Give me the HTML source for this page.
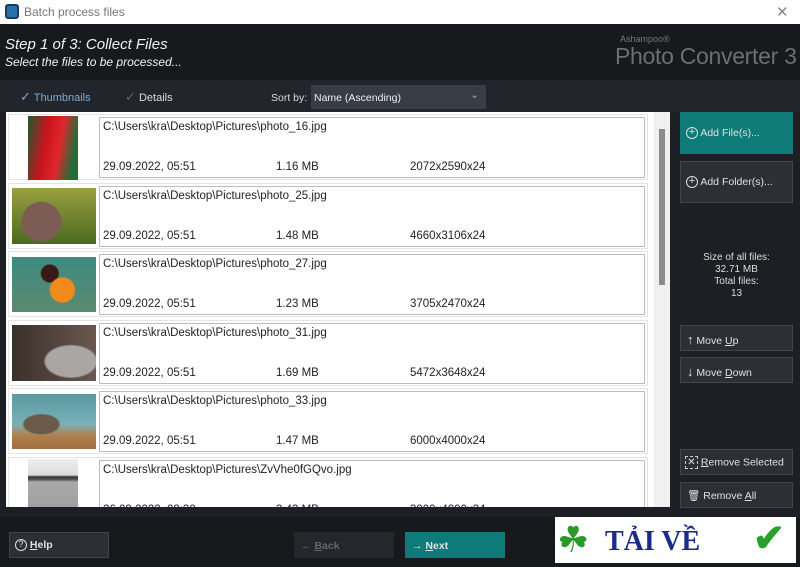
<!DOCTYPE html>
<html><head><meta charset="utf-8"><style>
*{margin:0;padding:0;box-sizing:border-box}
body{width:800px;height:567px;overflow:hidden;background:#1c1f24;font-family:"Liberation Sans",sans-serif;position:relative;color:#e6e6e6}
.abs{position:absolute}
.tb{left:0;top:0;width:800px;height:24px;background:#fff;color:#777;font-size:12px}
.hdr{left:0;top:24px;width:800px;height:56px;background:#17191c}
.tool{left:0;top:80px;width:800px;height:32px;background:#22252b}
.list{left:6px;top:112px;width:664px;height:395px;background:#fff;overflow:hidden}
.row{position:absolute;left:2px;width:640px;height:66px;border:1px solid #e4e4e4}
.info{position:absolute;left:90px;top:2px;width:546px;height:61px;border:1px solid #bdbdbd;font-size:11.5px;color:#222}
.info .p{position:absolute;left:3px;top:3px}
.info .d{position:absolute;top:43px}
.th{position:absolute}
.btn{position:absolute;background:#2c3036;border:1px solid #40454c;color:#e0e0e0;font-size:10.5px}
.ic{display:inline-block;width:12px;height:12px;border:1.4px solid #ddd;border-radius:50%;vertical-align:middle;text-align:center;line-height:9px;font-size:11px}
</style></head><body>
<div class="abs tb"><div class="abs" style="left:5px;top:4px;width:14px;height:15px;background:#2a6fa8;border-radius:3px;border:2px solid #1a3d5c"></div><span class="abs" style="left:24px;top:5px">Batch process files</span><span class="abs" style="left:776px;top:3px;font-size:15px;color:#888">✕</span></div>
<div class="abs hdr">
<div class="abs" style="left:5px;top:12px;font-size:15px;font-style:italic;color:#f2f2f2">Step 1 of 3: Collect Files</div>
<div class="abs" style="left:5px;top:31px;font-size:12px;font-style:italic;color:#f2f2f2">Select the files to be processed...</div>
<div class="abs" style="left:620px;top:10px;font-size:9px;color:#777">Ashampoo®</div>
<div class="abs" style="left:615px;top:19px;font-size:23px;color:#6e6e6e;letter-spacing:-0.3px">Photo Converter 3</div>
</div>
<div class="abs tool">
<span class="abs" style="left:20px;top:9px;font-size:11px;color:#7fa9d6"><span style="font-size:13px">✓</span> Thumbnails</span>
<span class="abs" style="left:125px;top:9px;font-size:11px;color:#ddd"><span style="font-size:13px;color:#666">✓</span> Details</span>
<span class="abs" style="left:271px;top:12px;font-size:10.5px;color:#ddd">Sort by:</span>
<div class="abs" style="left:311px;top:5px;width:175px;height:24px;background:#383c44;font-size:10.5px;color:#eee;padding:7px 3px">Name (Ascending)<span style="position:absolute;right:7px;top:4px;color:#aaa">⌄</span></div>
</div>
<div class="abs list">
<div class="row" style="top:2px"><div class="th" style="left:19px;top:1px;width:50px;height:64px;background:linear-gradient(100deg,#1d5a30 0%,#c8141c 35%,#e0262a 60%,#2a6a38 85%)"></div><div class="info"><span class="p">C:\Users\kra\Desktop\Pictures\photo_16.jpg</span><span class="d" style="left:3px">29.09.2022, 05:51</span><span class="d" style="left:176px">1.16 MB</span><span class="d" style="left:310px">2072x2590x24</span></div></div>
<div class="row" style="top:71px"><div class="th" style="left:3px;top:4px;width:84px;height:56px;background:radial-gradient(circle at 35% 60%,#7c5c55 0 30%,transparent 32%),linear-gradient(#9aa040,#4a6a20)"></div><div class="info"><span class="p">C:\Users\kra\Desktop\Pictures\photo_25.jpg</span><span class="d" style="left:3px">29.09.2022, 05:51</span><span class="d" style="left:176px">1.48 MB</span><span class="d" style="left:310px">4660x3106x24</span></div></div>
<div class="row" style="top:139px"><div class="th" style="left:3px;top:5px;width:84px;height:55px;background:radial-gradient(circle at 60% 60%,#f08a1a 0 20%,transparent 22%),radial-gradient(circle at 45% 30%,#3a1a16 0 14%,transparent 16%),linear-gradient(#3f8a80,#5a8a70)"></div><div class="info"><span class="p">C:\Users\kra\Desktop\Pictures\photo_27.jpg</span><span class="d" style="left:3px">29.09.2022, 05:51</span><span class="d" style="left:176px">1.23 MB</span><span class="d" style="left:310px">3705x2470x24</span></div></div>
<div class="row" style="top:208px"><div class="th" style="left:3px;top:4px;width:84px;height:56px;background:radial-gradient(ellipse at 70% 65%,#a9a6a4 0 30%,transparent 33%),linear-gradient(90deg,#3a302a,#6a5850)"></div><div class="info"><span class="p">C:\Users\kra\Desktop\Pictures\photo_31.jpg</span><span class="d" style="left:3px">29.09.2022, 05:51</span><span class="d" style="left:176px">1.69 MB</span><span class="d" style="left:310px">5472x3648x24</span></div></div>
<div class="row" style="top:276px"><div class="th" style="left:3px;top:5px;width:84px;height:55px;background:radial-gradient(ellipse at 35% 55%,#6a5a4a 0 22%,transparent 25%),linear-gradient(#5a9aa0 0,#7ab0b8 55%,#b08050 75%,#a07040)"></div><div class="info"><span class="p">C:\Users\kra\Desktop\Pictures\photo_33.jpg</span><span class="d" style="left:3px">29.09.2022, 05:51</span><span class="d" style="left:176px">1.47 MB</span><span class="d" style="left:310px">6000x4000x24</span></div></div>
<div class="row" style="top:345px"><div class="th" style="left:19px;top:1px;width:50px;height:64px;background:linear-gradient(#eee 0,#ddd 25%,#333 28%,#555 32%,#aaa 36%,#999 100%)"></div><div class="info"><span class="p">C:\Users\kra\Desktop\Pictures\ZvVhe0fGQvo.jpg</span><span class="d" style="left:3px">26.09.2022, 09:30</span><span class="d" style="left:176px">3.43 MB</span><span class="d" style="left:310px">3000x4000x24</span></div></div>
<div class="abs" style="left:648px;top:0;width:16px;height:395px;background:#f0f0f0"></div>
<div class="abs" style="left:653px;top:17px;width:6px;height:156px;background:#8c8c8c"></div>
</div>
<div class="btn" style="left:680px;top:112px;width:113px;height:42px;background:#0f7b78;border-color:#0f7b78;padding:14px 5px"><span class="ic">+</span> Add File(s)...</div>
<div class="btn" style="left:680px;top:161px;width:113px;height:42px;padding:14px 5px"><span class="ic">+</span> Add Folder(s)...</div>
<div class="abs" style="left:680px;top:252px;width:113px;text-align:center;font-size:10px;line-height:12px;color:#ddd">Size of all files:<br>32.71 MB<br>Total files:<br>13</div>
<div class="btn" style="left:680px;top:325px;width:113px;height:26px;padding:6px 6px"><span style="font-size:13px">↑</span> Move <u>U</u>p</div>
<div class="btn" style="left:680px;top:357px;width:113px;height:26px;padding:6px 6px"><span style="font-size:13px">↓</span> Move <u>D</u>own</div>
<div class="btn" style="left:680px;top:449px;width:113px;height:26px;padding:6px 4px"><span style="display:inline-block;width:13px;height:13px;border:1px dashed #ccc;vertical-align:middle;text-align:center;line-height:11px;font-size:10px">✕</span> <u>R</u>emove Selected</div>
<div class="btn" style="left:680px;top:482px;width:113px;height:26px;padding:6px 6px">🗑 Remove <u>A</u>ll</div>
<div class="abs" style="left:0;top:517px;width:800px;height:50px;background:#17191d"></div>
<div class="btn" style="left:9px;top:532px;width:100px;height:26px;padding:6px 5px;font-weight:bold"><span class="ic" style="font-weight:normal;font-size:9px">?</span> <u>H</u>elp</div>
<div class="btn" style="left:294px;top:532px;width:100px;height:26px;padding:7px 6px;background:#24272c;border-color:#24272c;color:#666;font-weight:bold">← <u>B</u>ack</div>
<div class="btn" style="left:405px;top:532px;width:100px;height:26px;padding:7px 6px;background:#0f7b78;border-color:#0f7b78;font-weight:bold">→ <u>N</u>ext</div>
<div class="abs" style="left:555px;top:517px;width:241px;height:46px;background:#fff">
<span class="abs" style="left:2px;top:2px;font-size:36px;color:#2a9a2a;line-height:42px">☘</span>
<span class="abs" style="left:50px;top:8px;font-size:28px;font-family:'Liberation Serif',serif;font-weight:bold;color:#1c2a8c;line-height:34px">TẢI VỀ</span>
<span class="abs" style="left:198px;top:0;font-size:38px;color:#2aa02a;font-weight:bold;line-height:44px">✔</span>
</div>
</body></html>
